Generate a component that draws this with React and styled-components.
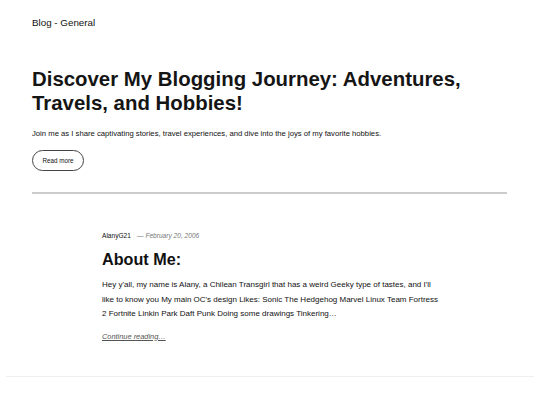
import styled, { createGlobalStyle } from "styled-components";

const Global = createGlobalStyle`
  html, body {
    margin: 0;
    padding: 0;
    background: #fff;
    font-family: "Liberation Sans", Arial, sans-serif;
    color: #111;
  }
`;

export default function App() {
  return (
    <>
      <Global />
      <Page>
        <SiteHeader>
          <SiteTitle>Blog - General</SiteTitle>
        </SiteHeader>

        <Hero>
          <HeroTitle>
            Discover My Blogging Journey: Adventures, Travels, and Hobbies!
          </HeroTitle>
          <HeroText>
            Join me as I share captivating stories, travel experiences, and
            dive into the joys of my favorite hobbies.
          </HeroText>
          <PillButton>Read more</PillButton>
        </Hero>

        <Separator />

        <Post>
          <Meta>
            <Author>AlanyG21</Author>
            <PostDate>— February 20, 2006</PostDate>
          </Meta>
          <PostTitle>About Me:</PostTitle>
          <Excerpt>
            Hey y'all, my name is Alany, a Chilean Transgirl that has a weird
            Geeky type of tastes, and I'll like to know you My main OC's
            design Likes: Sonic The Hedgehog Marvel Linux Team Fortress 2
            Fortnite Linkin Park Daft Punk Doing some drawings Tinkering…
          </Excerpt>
          <MoreLink href="#">Continue reading…</MoreLink>
        </Post>

        <FooterRule />
      </Page>
    </>
  );
}

const Page = styled.div`
  display: flex;
  flex-direction: column;
  width: 540px;
  min-height: 405px;
`;

const SiteHeader = styled.header`
  padding: 17px 32px 0;
`;

const SiteTitle = styled.p`
  margin: 0;
  font-size: 9.8px;
  line-height: 12px;
  color: #111;
`;

const Hero = styled.section`
  display: flex;
  flex-direction: column;
  align-items: flex-start;
  padding: 38px 32px 0;
`;

const HeroTitle = styled.h1`
  margin: 0;
  max-width: 470px;
  font-size: 20.4px;
  line-height: 24px;
  font-weight: 700;
  color: #151515;
`;

const HeroText = styled.p`
  margin: 14px 0 0;
  font-size: 7.7px;
  line-height: 10px;
  color: #111;
`;

const PillButton = styled.button`
  margin-top: 11px;
  width: 52px;
  height: 21px;
  padding: 0;
  border: 1px solid #444;
  border-radius: 11px;
  background: #fff;
  font-family: inherit;
  font-size: 6.3px;
  color: #111;
`;

const Separator = styled.hr`
  margin: 21px 33px 0 32px;
  border: none;
  height: 2px;
  background: #ccc;
`;

const Post = styled.article`
  display: flex;
  flex-direction: column;
  align-items: flex-start;
  padding: 38px 100px 0 102px;
`;

const Meta = styled.div`
  display: flex;
  gap: 6px;
  font-size: 6.6px;
  line-height: 8px;
`;

const Author = styled.span`
  color: #111;
`;

const PostDate = styled.span`
  color: #777;
  font-style: italic;
`;

const PostTitle = styled.h2`
  margin: 9px 0 0;
  font-size: 16.2px;
  line-height: 20px;
  font-weight: 700;
  color: #111;
`;

const Excerpt = styled.p`
  margin: 9px 0 0;
  font-size: 8px;
  line-height: 14.5px;
  color: #111;
`;

const MoreLink = styled.a`
  margin-top: 10px;
  font-size: 7.4px;
  font-style: italic;
  color: #555;
  text-decoration: underline;
`;

const FooterRule = styled.div`
  margin: 35px 6px 0;
  height: 1px;
  background: #eee;
`;
